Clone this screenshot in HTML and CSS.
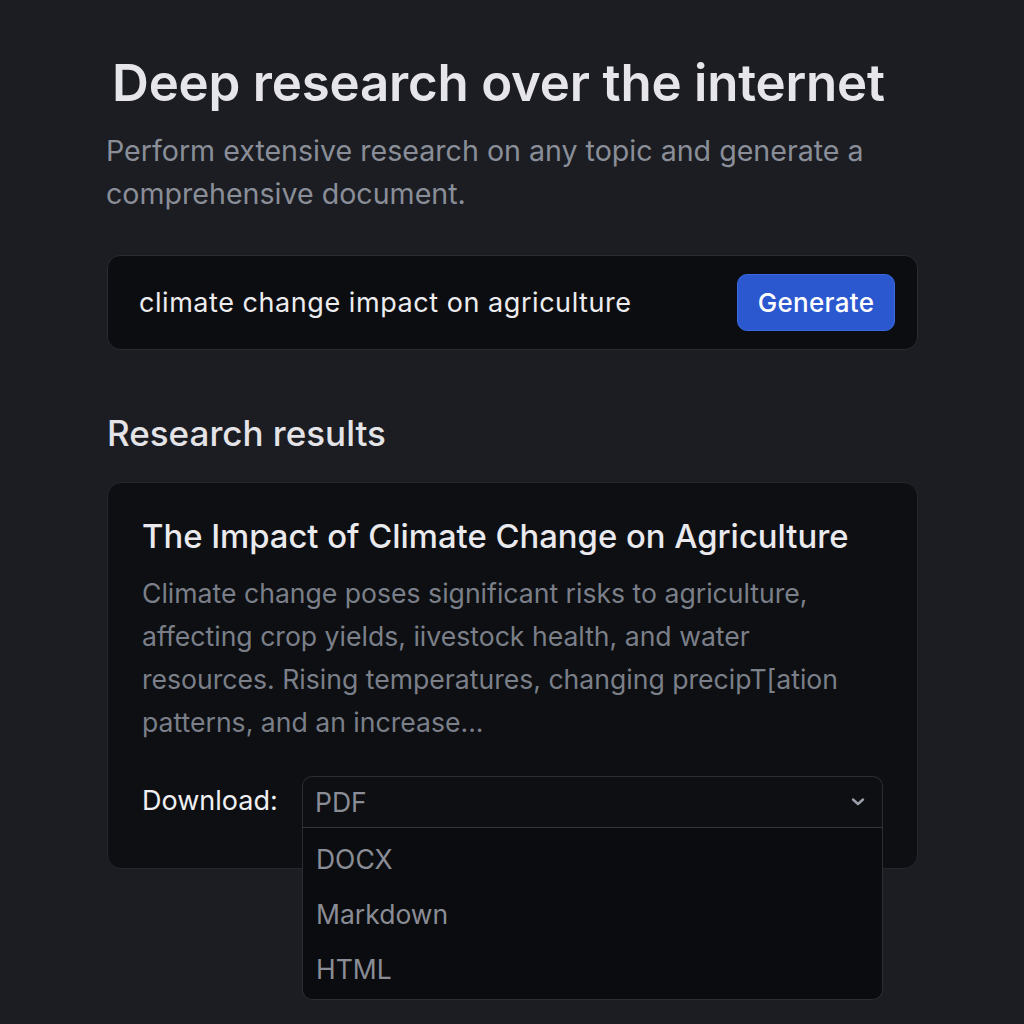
FILE: index.html
```html
<!DOCTYPE html>
<html lang="en">
<head>
<meta charset="utf-8">
<title>Deep research</title>
<link rel="stylesheet" href="styles.css">
</head>
<body>
<main class="page">
  <h1 class="title">Deep research over the internet</h1>
  <p class="subtitle">Perform extensive research on any topic and generate a comprehensive document.</p>

  <form class="search">
    <span class="query">climate change impact on agriculture</span>
    <button type="button" class="generate">Generate</button>
  </form>

  <h2 class="section">Research results</h2>

  <section class="card">
    <h3 class="card-title">The Impact of Climate Change on Agriculture</h3>
    <p class="card-text">Climate change poses significant risks to agriculture, affecting crop yields, iivestock health, and water resources. Rising temperatures, changing precipT[ation patterns, and an increase...</p>
    <div class="download">
      <span class="dl-label">Download:</span>
      <div class="select">
        <div class="select-head">
          <span>PDF</span>
          <svg class="chev" width="14" height="10" viewBox="0 0 14 10"><path d="M2 2.5 L7 7 L12 2.5" fill="none" stroke="#9a9ea8" stroke-width="2.4" stroke-linecap="round" stroke-linejoin="round"/></svg>
        </div>
        <ul class="menu">
          <li>DOCX</li>
          <li>Markdown</li>
          <li>HTML</li>
        </ul>
      </div>
    </div>
  </section>
</main>
</body>
</html>
```

FILE: styles.css
```css
* { box-sizing: border-box; }
html, body { margin: 0; padding: 0; }
body {
  background: #1b1d22;
  font-family: Inter, "Noto Sans", sans-serif;
  width: 1024px;
  height: 1024px;
  overflow: hidden;
}
.page {
  width: 811px;
  margin-left: 107px;
  padding-top: 53px;
}
.title {
  margin: 0 0 0 5px;
  font-size: 51px;
  font-weight: 600;
  color: #e6e6ea;
  line-height: 60px;
  letter-spacing: -0.2px;
}
.subtitle {
  margin: 16px 0 0 -1px;
  font-size: 28.6px;
  line-height: 43px;
  color: #8a8e98;
  font-weight: 400;
  width: 800px;
}
.search {
  margin-top: 40px;
  height: 95px;
  background: #0c0d10;
  border: 1.5px solid #2a2c32;
  border-radius: 13px;
  display: flex;
  align-items: center;
  justify-content: space-between;
  padding: 0 22px 0 31px;
}
.query {
  font-size: 27px;
  letter-spacing: 0.55px;
  color: #ececef;
}
.generate {
  font-family: Inter, "Noto Sans", sans-serif;
  background: #2b58cf;
  color: #ffffff;
  border: 1px solid #3a68e0;
  border-radius: 10px;
  font-size: 26px;
  font-weight: 500;
  letter-spacing: 0.3px;
  width: 158px;
  height: 57px;
  padding: 0;
}
.section {
  margin: 61px 0 0 0;
  font-size: 35px;
  font-weight: 500;
  color: #e4e4e8;
  line-height: 44px;
}
.card {
  margin-top: 27px;
  height: 387px;
  background: #0d0f12;
  border: 1.5px solid #25272c;
  border-radius: 14px;
  padding: 32px 34px 0 34px;
  overflow: visible;
}
.card-title {
  margin: 0;
  font-size: 32.8px;
  font-weight: 500;
  color: #eaeaee;
  line-height: 42px;
}
.card-text {
  margin: 15px 0 0 0;
  font-size: 26.6px;
  line-height: 43px;
  color: #7b7f89;
  width: 705px;
}
.download {
  display: flex;
  align-items: flex-start;
  margin-top: 32px;
}
.dl-label {
  font-size: 27px;
  color: #f0f0f2;
  width: 160px;
  line-height: 50px;
}
.select {
  width: 581px;
  position: relative;
  z-index: 2;
}
.select-head {
  height: 52px;
  border: 1.5px solid #2b2d33;
  border-bottom: 1.5px solid #33363c;
  border-radius: 10px 10px 0 0;
  background: #0d0f12;
  display: flex;
  align-items: center;
  justify-content: space-between;
  padding: 0 17px 0 12px;
  font-size: 26.5px;
  color: #8a8d96;
}
.chev { display: block; }
.menu {
  list-style: none;
  margin: 0;
  padding: 4px 0 0 0;
  height: 172px;
  background: #0b0c0f;
  border: 1.5px solid #2b2d33;
  border-top: none;
  border-radius: 0 0 10px 10px;
}
.menu li {
  font-size: 26.5px;
  color: #8a8d96;
  height: 55px;
  line-height: 55px;
  padding-left: 13px;
}
```
